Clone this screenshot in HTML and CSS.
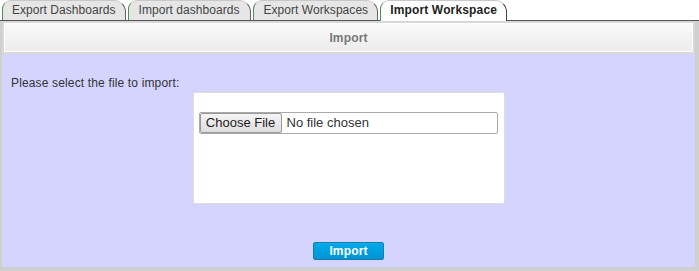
FILE: index.html
```html
<!DOCTYPE html>
<html lang="en">
<head>
    <meta charset="UTF-8">
    <title>Import Workspace</title>
    <link rel="stylesheet" href="styles.css">
</head>
<body>
    <div class="tabs">
        <div class="tab">Export Dashboards</div>
        <div class="tab tab-wide">Import dashboards</div>
        <div class="tab">Export Workspaces</div>
        <div class="tab active">Import Workspace</div>
    </div>
    <div class="panel">
        <div class="panel-header">Import</div>
        <div class="panel-body">
            <p class="hint">Please select the file to import:</p>
            <div class="upload-box">
                <div class="file-input">
                    <span class="file-btn">Choose File</span>
                    <span class="file-name">No file chosen</span>
                </div>
            </div>
            <div class="actions">
                <button class="import-btn">Import</button>
            </div>
        </div>
    </div>
</body>
</html>
```

FILE: styles.css
```css
* {
    margin: 0;
    padding: 0;
    box-sizing: border-box;
}
body {
    font-family: "Liberation Sans", Arial, sans-serif;
    font-size: 12px;
    letter-spacing: 0.15px;
    color: #333;
    background: #fff;
    width: 699px;
    height: 271px;
    overflow: hidden;
}

/* tab strip */
.tabs {
    display: flex;
    gap: 2px;
    padding-left: 2px;
    height: 21px;
    border-bottom: 1px solid #555;
}
.tab {
    height: 20px;
    padding: 2px 9px 0 9px;
    background: #e6e6e6;
    color: #444;
    letter-spacing: 0.05px;
    border-left: 1px solid #4f8f4f;
    border-right: 1px solid #666;
    border-top: 1px solid #c8c8c8;
    border-radius: 9px 12px 0 0;
    white-space: nowrap;
}
.tab-wide {
    padding: 2px 11px 0 10px;
}
.tab.active {
    height: 21px;
    background: #fff;
    color: #222;
    font-weight: bold;
    letter-spacing: 0.15px;
    border-right-color: #444;
    margin-bottom: -1px;
}

/* panel */
.panel {
    height: 250px;
    background: #d4d4ff;
    border-left: 2px solid #cfcfcf;
    border-right: 4px solid #cfcfcf;
    border-bottom: 4px solid #cfcfcf;
    display: flex;
    flex-direction: column;
}
.panel-header {
    height: 33px;
    border: 2px solid #d8d8d8;
    border-top-width: 3px;
    outline: 1px solid #fff;
    outline-offset: -3px;
    background: linear-gradient(to bottom, #fafafa, #ececec);
    color: #777;
    font-weight: bold;
    text-align: center;
    padding-top: 7px;
}
.panel-body {
    flex: 1;
    padding: 22px 9px 0 9px;
}
.hint {
    line-height: 15px;
}
.upload-box {
    width: 312px;
    height: 112px;
    margin: 1px auto 0;
    background: #fff;
    border: 1px solid #ddd;
    padding: 19px 6px 0 5px;
}
.file-input {
    display: flex;
    height: 22px;
    border: 1px solid #aaa;
    border-radius: 2px;
    letter-spacing: 0;
}
.file-btn {
    width: 82px;
    height: 20px;
    line-height: 18px;
    text-align: center;
    font-size: 13px;
    color: #222;
    background: linear-gradient(to bottom, #f4f4f4, #dedede);
    border: 1px solid #999;
    border-radius: 2px;
}
.file-name {
    padding-left: 5px;
    line-height: 20px;
    font-size: 13px;
    color: #333;
}
.actions {
    display: flex;
    justify-content: center;
    padding-top: 38px;
}
.import-btn {
    width: 71px;
    height: 18px;
    font-family: "Liberation Sans", Arial, sans-serif;
    font-size: 12px;
    font-weight: bold;
    letter-spacing: 0.15px;
    color: #fff;
    background: linear-gradient(to bottom, #00aaea, #0094d4);
    border: 1px solid #1a7ab0;
    border-radius: 2px;
    cursor: pointer;
}
```
